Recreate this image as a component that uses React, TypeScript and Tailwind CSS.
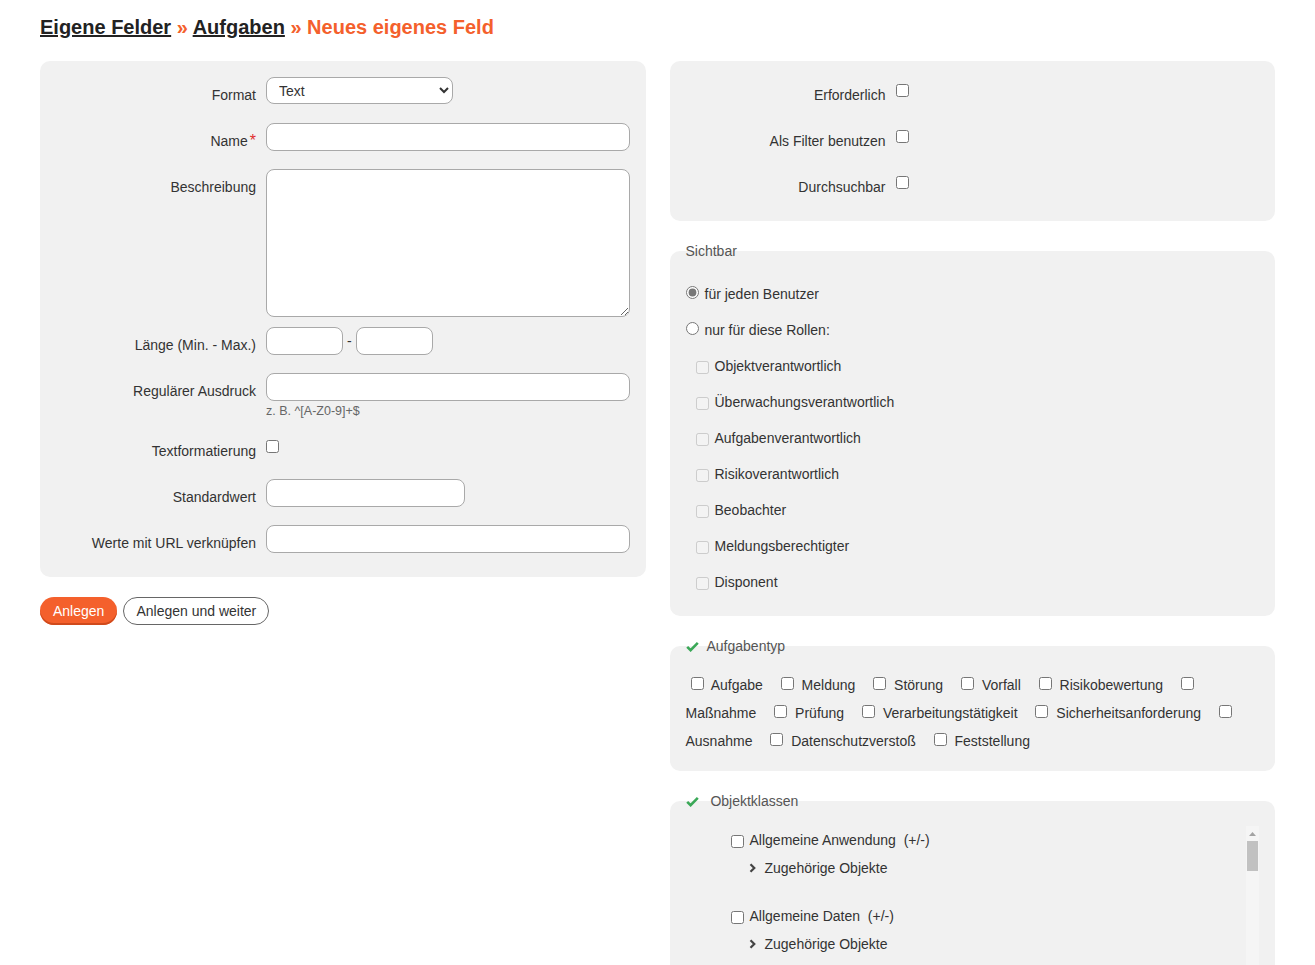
import { Fragment } from 'react';

const roles = [
  'Objektverantwortlich',
  'Überwachungsverantwortlich',
  'Aufgabenverantwortlich',
  'Risikoverantwortlich',
  'Beobachter',
  'Meldungsberechtigter',
  'Disponent',
];

const taskTypes = [
  'Aufgabe',
  'Meldung',
  'Störung',
  'Vorfall',
  'Risikobewertung',
  'Maßnahme',
  'Prüfung',
  'Verarbeitungstätigkeit',
  'Sicherheitsanforderung',
  'Ausnahme',
  'Datenschutzverstoß',
  'Feststellung',
];

const objectClassNames = [
  'Allgemeine Anwendung',
  'Allgemeine Daten',
  'Anwendung',
  'Arbeitsplatz',
  'Auftragsverarbeiter',
  'Datenbank',
  'Datenkategorie',
  'Dienstleister',
];

const inputCls = 'h-[28px] rounded-[8px] border border-[#a9a9a9] bg-white px-2 text-[14px] outline-none';

function Row({ label, children, required = false }: { label: string; children: React.ReactNode; required?: boolean }) {
  return (
    <div className="mb-[18px] flex min-h-[28px]">
      <label className="w-[226px] shrink-0 pr-[10px] pt-2 text-right leading-5">
        {label}
        {required && <span className="ml-[2px] text-[16px] leading-4 text-[#e02d2d]">*</span>}
      </label>
      <div className="min-w-0 flex-1">{children}</div>
    </div>
  );
}

function GreenCheck() {
  return (
    <svg width="13" height="11" viewBox="0 0 13 11" className="mr-2 inline-block align-[-1px]">
      <path d="M1.2 5.8 L4.6 9.2 L11.8 1.8" fill="none" stroke="#3aa857" strokeWidth="2.6" />
    </svg>
  );
}

function Chevron() {
  return (
    <svg width="7" height="10" viewBox="0 0 7 10" className="inline-block">
      <path d="M1.5 1.2 L5.3 5 L1.5 8.8" fill="none" stroke="#444" strokeWidth="2.2" />
    </svg>
  );
}

export default function App() {
  return (
    <div className="h-[965px] overflow-hidden bg-white px-10 pt-[15px] font-['Liberation_Sans',Arial,sans-serif] text-[14px] text-[#333]">
      <h1 className="mb-[22px] text-[20px] font-bold leading-6">
        <a className="text-[#222] underline">Eigene Felder</a>
        <span className="text-[#f4602c]"> » </span>
        <a className="text-[#222] underline">Aufgaben</a>
        <span className="text-[#f4602c]"> » Neues eigenes Feld</span>
      </h1>

      <div className="grid grid-cols-2 gap-6">
        {/* linke Spalte */}
        <div>
          <div className="rounded-[10px] bg-[#f1f1f1] pb-[6px] pr-4 pt-4">
            <Row label="Format">
              <select className="h-[27px] w-[187px] rounded-[8px] border border-[#a9a9a9] bg-white pl-2 text-[14px] text-[#333]">
                <option>Text</option>
              </select>
            </Row>
            <Row label="Name" required>
              <input className={`${inputCls} w-full`} />
            </Row>
            <div className="mb-[10px] flex">
              <label className="w-[226px] shrink-0 pr-[10px] pt-2 text-right leading-5">Beschreibung</label>
              <textarea className="h-[148px] flex-1 rounded-[8px] border border-[#a9a9a9] bg-white px-2 text-[14px]" />
            </div>
            <Row label="Länge (Min. - Max.)">
              <div className="flex items-center">
                <input className={`${inputCls} w-[77px]`} />
                <span className="mx-[4px] leading-5">-</span>
                <input className={`${inputCls} w-[77px]`} />
              </div>
            </Row>
            <div className="mb-4 flex">
              <label className="w-[226px] shrink-0 pr-[10px] pt-2 text-right leading-5">Regulärer Ausdruck</label>
              <div className="flex-1">
                <input className={`${inputCls} w-full`} />
                <div className="mt-[3px] h-[13px] text-[12.5px] leading-[14px] text-[#666]">z. B. ^[A-Z0-9]+$</div>
              </div>
            </div>
            <Row label="Textformatierung">
              <input type="checkbox" className="m-0 mt-[7px] block h-[13px] w-[13px]" />
            </Row>
            <Row label="Standardwert">
              <input className={`${inputCls} w-[199px]`} />
            </Row>
            <Row label="Werte mit URL verknüpfen">
              <input className={`${inputCls} w-full`} />
            </Row>
          </div>

          <div className="mt-5 flex gap-[6px]">
            <button
              type="button"
              className="h-[28px] rounded-full bg-[#f4602c] px-[13px] text-[14px] text-white shadow-[inset_0_-2px_0_#d04a1c]"
            >
              Anlegen
            </button>
            <button
              type="button"
              className="h-[28px] rounded-full border border-[#666] bg-white px-3 text-[14px] text-[#333]"
            >
              Anlegen und weiter
            </button>
          </div>
        </div>

        {/* rechte Spalte */}
        <div>
          <div className="rounded-[10px] bg-[#f1f1f1] pb-[6px] pr-4 pt-4">
            {['Erforderlich', 'Als Filter benutzen', 'Durchsuchbar'].map((l) => (
              <Row key={l} label={l}>
                <input type="checkbox" className="m-0 mt-[7px] block h-[13px] w-[13px]" />
              </Row>
            ))}
          </div>

          <fieldset className="mt-[20px] min-w-0 rounded-[10px] border-0 bg-[#f1f1f1] px-4 pb-4 pt-[15px]">
            <legend className="leading-5 text-[#555]">Sichtbar</legend>
            <div className="leading-9">
              <input type="radio" name="vis" defaultChecked className="m-0 mr-[6px] accent-[#777]" />
              für jeden Benutzer
            </div>
            <div className="leading-9">
              <input type="radio" name="vis" className="m-0 mr-[6px]" />
              nur für diese Rollen:
            </div>
            {roles.map((r) => (
              <div key={r} className="leading-9">
                <input type="checkbox" disabled className="m-0 ml-[10px] mr-[6px] align-middle" />
                {r}
              </div>
            ))}
          </fieldset>

          <fieldset className="mt-[20px] min-w-0 rounded-[10px] border-0 bg-[#f1f1f1] px-4 pb-4 pt-[15px]">
            <legend className="leading-5 text-[#555]">
              <GreenCheck />
              Aufgabentyp
            </legend>
            <div className="leading-7">
              {taskTypes.map((t) => (
                <Fragment key={t}>
                  <input type="checkbox" className="m-0 ml-[5px] mr-[4px]" />{' '}
                  <span className="mr-[9px]">{t}</span>{' '}
                </Fragment>
              ))}
            </div>
          </fieldset>

          <fieldset className="mt-[20px] min-w-0 rounded-[10px] border-0 bg-[#f1f1f1] px-4 pb-4 pt-[15px]">
            <legend className="leading-5 text-[#555]">
              <GreenCheck />
              {'\u00a0'}Objektklassen
            </legend>
            <div className="flex h-[360px]">
              <div className="min-w-0 flex-1 overflow-hidden">
                {objectClassNames.map((n) => (
                  <div key={n} className="mb-5">
                    <div className="pl-[45px] leading-7">
                      <input type="checkbox" className="m-0 mr-[6px] align-middle" />
                      {n}
                      {'\u00a0 '}(+/-)
                    </div>
                    <div className="flex items-center pl-[63px] leading-7">
                      <Chevron />
                      <span className="ml-[9px]">Zugehörige Objekte</span>
                    </div>
                  </div>
                ))}
              </div>
              {/* Scrollleiste */}
              <div className="flex w-[13px] shrink-0 flex-col bg-[#f5f5f5]">
                <div className="flex h-[15px] items-center justify-center">
                  <svg width="7" height="4" viewBox="0 0 7 4">
                    <path d="M0 4 L3.5 0 L7 4 Z" fill="#a3a3a3" />
                  </svg>
                </div>
                <div className="mx-px h-[30px] bg-[#c1c1c1]" />
              </div>
            </div>
          </fieldset>
        </div>
      </div>
    </div>
  );
}
